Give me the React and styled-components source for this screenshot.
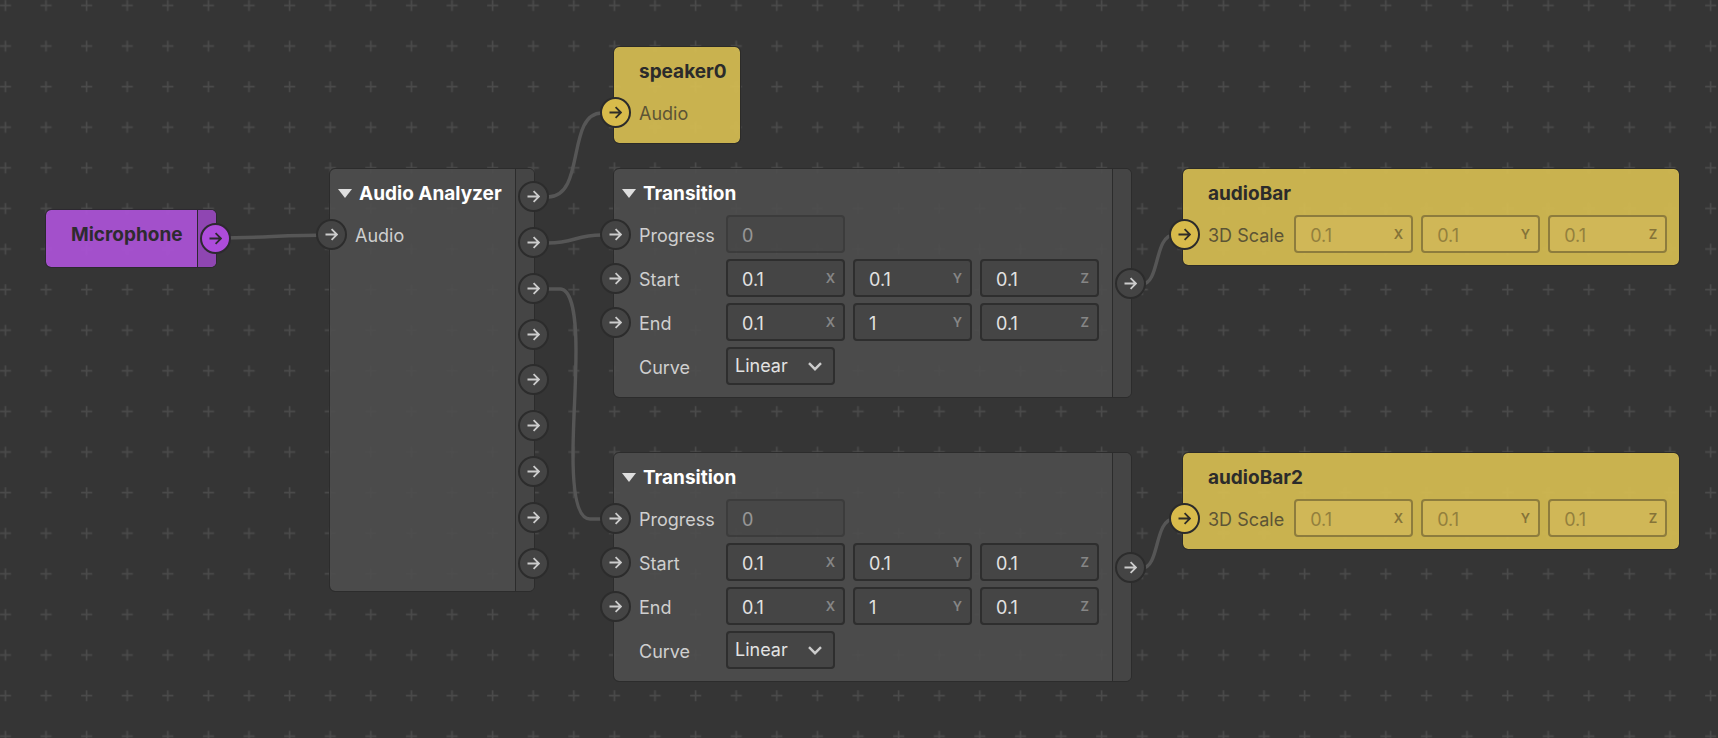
import React from "react";
import styled, { createGlobalStyle, css } from "styled-components";

const GlobalStyle = createGlobalStyle`
  *, *::before, *::after { box-sizing: border-box; }
  body {
    margin: 0;
    background: #353535;
    font-family: Inter, "Liberation Sans", sans-serif;
    font-size: 18px;
    line-height: 24px;
  }
`;

const tones = {
  dark: {
    fill: "rgba(78, 78, 78, 0.9)",
    rail: "rgba(69, 69, 69, 0.9)",
    edge: "#2c2c2c",
    title: "#ffffff",
    label: "#cfcfcf",
    port: "#444444",
    portEdge: "#2c2c2c",
    arrow: "#cccccc",
    field: "#454545",
    fieldEdge: "#2e2e2e",
    value: "#e2e2e2",
    axis: "#868686",
  },
  yellow: {
    fill: "rgba(210, 185, 81, 0.95)",
    rail: "#b59f46",
    edge: "#2c2b28",
    title: "#2b2b2b",
    label: "#5c5435",
    port: "#d8bb4b",
    portEdge: "#2b2b2b",
    arrow: "#2f2d27",
    field: "#d0b757",
    fieldEdge: "#8d7c3d",
    value: "#93803d",
    axis: "#857338",
  },
  purple: {
    fill: "rgba(170, 82, 212, 0.95)",
    rail: "#8f46b2",
    edge: "#2c2830",
    title: "#2e2b30",
    label: "#3d2f44",
    port: "#ad4cdb",
    portEdge: "#2d2930",
    arrow: "#2d2930",
  },
};

const Canvas = styled.main`
  position: relative;
  width: 100%;
  min-height: 100vh;
  overflow: hidden;
`;

const Backdrop = styled.svg`
  position: absolute;
  inset: 0;
  width: 100%;
  height: 100%;
`;

const NodeBox = styled.section`
  position: absolute;
  left: ${(p) => p.$x}px;
  top: ${(p) => p.$y}px;
  width: ${(p) => p.$w}px;
  min-height: ${(p) => p.$minH || 0}px;
  display: flex;
  border: 1px solid ${(p) => p.$tone.edge};
  border-radius: 6px;
  background: ${(p) => p.$tone.fill};
  background-clip: padding-box;
`;

const Body = styled.div`
  flex: 1;
  min-width: 0;
  display: flex;
  flex-direction: column;
  padding-bottom: 11px;
`;

const Header = styled.header`
  height: 46px;
  padding: 3px 0 0 ${(p) => (p.$foldable ? 8 : 25)}px;
  display: flex;
  align-items: center;
  gap: 7px;
`;

const Fold = styled.button`
  display: flex;
  padding: 0;
  border: 0;
  background: none;
`;

const Title = styled.h2`
  margin: 0;
  font-size: 19px;
  line-height: 24px;
  font-weight: 700;
  white-space: nowrap;
  color: ${(p) => p.$tone.title};
`;

const Rows = styled.div`
  display: flex;
  flex-direction: column;
  gap: 5px;
`;

const Row = styled.div`
  height: 39px;
  display: flex;
  align-items: center;
  padding-left: ${(p) => (p.$portless ? 25 : 0)}px;
`;

const Label = styled.label`
  min-width: ${(p) => (p.$wide ? 87 : 0)}px;
  padding: 2px ${(p) => (p.$wide ? 6 : 10)}px 0 0;
  color: ${(p) => p.$tone.label};
  white-space: nowrap;
`;

const Fields = styled.div`
  align-self: flex-start;
  display: flex;
  gap: 8px;
`;

const control = css`
  font: inherit;
  height: 38px;
  border: 2px solid ${(p) => p.$tone.fieldEdge};
  border-radius: 4px;
  background: ${(p) => p.$tone.field};
  color: ${(p) => p.$tone.value};
`;

const FieldBox = styled.span`
  position: relative;
  display: flex;
  opacity: ${(p) => (p.$dim ? 0.5 : 1)};
`;

const Input = styled.input`
  ${control}
  width: 119px;
  padding: 2px 24px 0 14px;
`;

const Axis = styled.span`
  position: absolute;
  right: 10px;
  top: 11px;
  font-size: 13px;
  line-height: 16px;
  font-weight: 600;
  color: ${(p) => p.$tone.axis};
`;

const Select = styled.select`
  ${control}
  appearance: none;
  width: 109px;
  padding: 0 28px 0 7px;
`;

const Chevron = styled.svg`
  position: absolute;
  right: 13px;
  top: 15px;
  pointer-events: none;
`;

const PortButton = styled.button`
  flex: none;
  width: 31px;
  height: 31px;
  padding: 0;
  display: flex;
  align-items: center;
  justify-content: center;
  border: 2px solid ${(p) => p.$tone.portEdge};
  border-radius: 50%;
  background: ${(p) => p.$tone.port};
  color: ${(p) => p.$tone.arrow};
  margin: ${(p) => (p.$side === "in" ? "0 8px 0 -14px" : "0 -15px 0 0")};
`;

const Rail = styled.div`
  flex: none;
  width: 19px;
  padding: 5px 0;
  display: flex;
  flex-direction: column;
  align-items: flex-end;
  justify-content: space-around;
  border-left: 1px solid ${(p) => p.$tone.edge};
  border-radius: 0 5px 5px 0;
  background: ${(p) => p.$tone.rail};
`;

function Port({ tone, side, name }) {
  return (
    <PortButton type="button" $tone={tone} $side={side} aria-label={name}>
      <svg width="13" height="13" viewBox="0 0 13 13" fill="none" stroke="currentColor" strokeWidth="1.8">
        <path d="M0.5 6.5H12M6.6 1.2L12 6.5L6.6 11.8" />
      </svg>
    </PortButton>
  );
}

function Field({ tone, value, axis, id, name, dim }) {
  return (
    <FieldBox $dim={dim}>
      <Input $tone={tone} id={id} aria-label={id ? undefined : name} defaultValue={value} />
      {axis && <Axis $tone={tone}>{axis}</Axis>}
    </FieldBox>
  );
}

function FieldRow({ tone, id, label, values, wide, dim }) {
  return (
    <Row>
      <Port tone={tone} side="in" name={`${label} input`} />
      <Label $tone={tone} $wide={wide} htmlFor={id} as={values ? undefined : "span"}>{label}</Label>
      {values && (
        <Fields>
          {values.map((v, i) => (
            <Field
              key={i}
              tone={tone}
              value={v}
              dim={dim}
              id={i === 0 ? id : undefined}
              name={`${label} ${"XYZ"[i]}`}
              axis={values.length > 1 ? "XYZ"[i] : null}
            />
          ))}
        </Fields>
      )}
    </Row>
  );
}

function Node({ tone, x, y, w, minH, title, foldable, outputs = 0, children }) {
  return (
    <NodeBox $tone={tone} $x={x} $y={y} $w={w} $minH={minH}>
      <Body>
        <Header $foldable={foldable}>
          {foldable && (
            <Fold type="button" aria-label={`Collapse ${title}`}>
              <svg width="14" height="9" viewBox="0 0 14 9" fill="#dedede">
                <path d="M0 0H14L7 9Z" />
              </svg>
            </Fold>
          )}
          <Title $tone={tone}>{title}</Title>
        </Header>
        <Rows>{children}</Rows>
      </Body>
      {outputs > 0 && (
        <Rail $tone={tone}>
          {Array.from({ length: outputs }, (_, i) => (
            <Port key={i} tone={tone} side="out" name={`${title} output ${i + 1}`} />
          ))}
        </Rail>
      )}
    </NodeBox>
  );
}

function Transition({ x, y, id }) {
  const tone = tones.dark;
  return (
    <Node tone={tone} x={x} y={y} w={519} title="Transition" foldable outputs={1}>
      <FieldRow tone={tone} wide dim id={`${id}-progress`} label="Progress" values={["0"]} />
      <FieldRow tone={tone} wide id={`${id}-start`} label="Start" values={["0.1", "0.1", "0.1"]} />
      <FieldRow tone={tone} wide id={`${id}-end`} label="End" values={["0.1", "1", "0.1"]} />
      <Row $portless>
        <Label $tone={tone} $wide htmlFor={`${id}-curve`}>Curve</Label>
        <Fields>
          <FieldBox>
            <Select $tone={tone} id={`${id}-curve`}>
              <option>Linear</option>
            </Select>
            <Chevron width="14" height="9" viewBox="0 0 14 9" fill="none" stroke="#cccccc" strokeWidth="2.4">
              <path d="M1 1.2L7 7.2L13 1.2" />
            </Chevron>
          </FieldBox>
        </Fields>
      </Row>
    </Node>
  );
}

function ScaleNode({ x, y, title }) {
  return (
    <Node tone={tones.yellow} x={x} y={y} w={498} title={title}>
      <FieldRow tone={tones.yellow} id={`${title}-scale`} label="3D Scale" values={["0.1", "0.1", "0.1"]} />
    </Node>
  );
}

const wires = [
  "M216 238C265 238 280 235 331 235",
  "M534 197H548C586 197 566 113 602 113H615",
  "M534 243H548C575 243 575 235 602 235H615",
  "M534 289H560C572 289 576 318 576 350C576 390 573 420 573 455C573 490 577 519 590 519H615",
  "M1131 284H1142C1160 284 1154 235 1174 235H1184",
  "M1131 568H1142C1160 568 1154 519 1174 519H1184",
];

export default function App() {
  return (
    <>
      <GlobalStyle />
      <Canvas>
        <Backdrop aria-hidden="true">
          <defs>
            <pattern id="crosses" x="-15" y="-15" width="40.6" height="40.6" patternUnits="userSpaceOnUse">
              <path d="M15 20.4H26M20.4 15V26" stroke="#4a4a4a" strokeWidth="1.6" />
            </pattern>
          </defs>
          <rect width="100%" height="100%" fill="url(#crosses)" />
          <g fill="none" stroke="#565656" strokeWidth="3.4">
            {wires.map((d) => (
              <path key={d} d={d} />
            ))}
          </g>
        </Backdrop>

        <Node tone={tones.purple} x={45} y={209} w={172} title="Microphone" outputs={1} />
        <Node tone={tones.dark} x={329} y={168} w={206} minH={424} title="Audio Analyzer" foldable outputs={9}>
          <FieldRow tone={tones.dark} label="Audio" />
        </Node>
        <Node tone={tones.yellow} x={613} y={46} w={128} title="speaker0">
          <FieldRow tone={tones.yellow} label="Audio" />
        </Node>
        <Transition x={613} y={168} id="first" />
        <Transition x={613} y={452} id="second" />
        <ScaleNode x={1182} y={168} title="audioBar" />
        <ScaleNode x={1182} y={452} title="audioBar2" />
      </Canvas>
    </>
  );
}
